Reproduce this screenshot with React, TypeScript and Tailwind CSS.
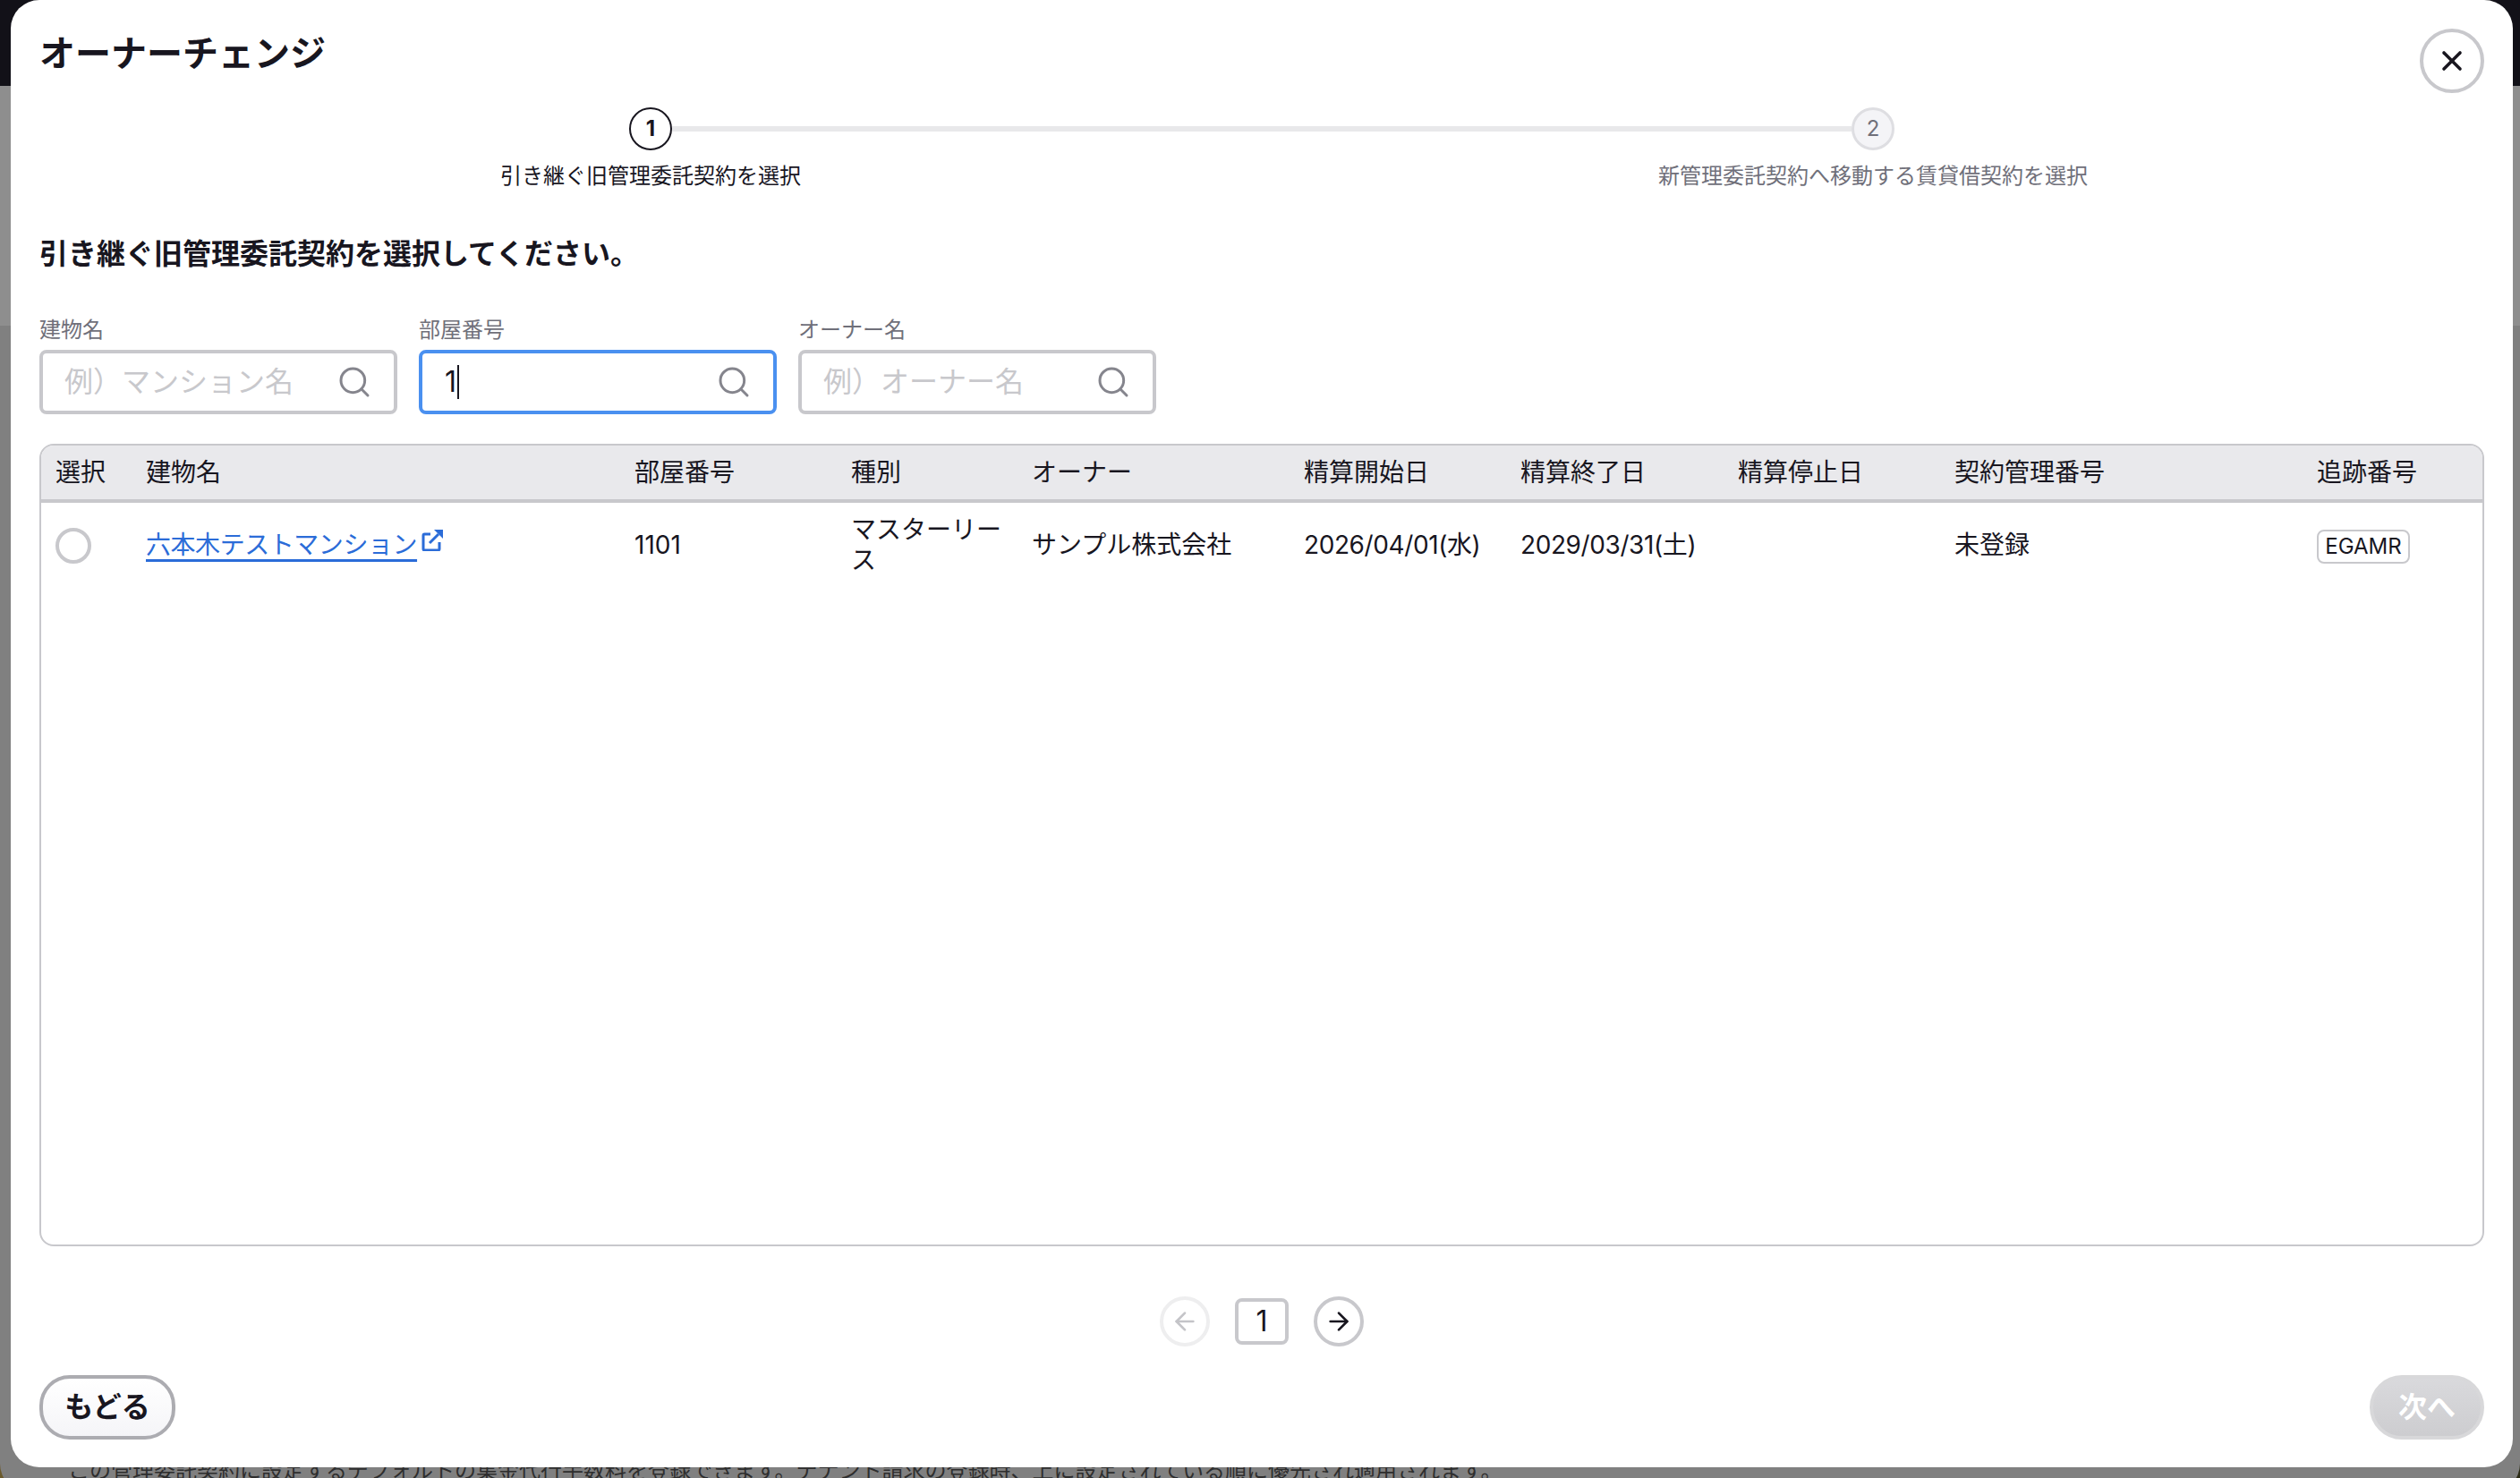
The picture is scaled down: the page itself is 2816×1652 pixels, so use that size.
import React from "react";
import { Search, X, ArrowLeft, ArrowRight } from "lucide-react";

const cols = [
  { label: "選択", w: "w-[101px]" },
  { label: "建物名", w: "w-[546px]" },
  { label: "部屋番号", w: "w-[242px]" },
  { label: "種別", w: "w-[202px]" },
  { label: "オーナー", w: "w-[304px]" },
  { label: "精算開始日", w: "w-[242px]" },
  { label: "精算終了日", w: "w-[243px]" },
  { label: "精算停止日", w: "w-[242px]" },
  { label: "契約管理番号", w: "w-[405px]" },
  { label: "追跡番号", w: "w-auto" },
];

function ExternalIcon() {
  return (
    <svg width="24" height="24" viewBox="0 0 24 24" className="ml-[5px] -mt-[14px] inline-block shrink-0 text-[#2b6cd8]" fill="none">
      <path d="M10 5H3.5A1.5 1.5 0 0 0 2 6.5V21.5A1.5 1.5 0 0 0 3.5 23H18.5A1.5 1.5 0 0 0 20 21.5V14" stroke="currentColor" strokeWidth="3" />
      <path d="M9 15L19 5" stroke="currentColor" strokeWidth="3" />
      <path d="M14 0H24V10Z" fill="currentColor" />
    </svg>
  );
}

function Field({ label, placeholder, value }: { label: string; placeholder: string; value?: string }) {
  const focused = value !== undefined;
  return (
    <div className="w-[400px]">
      <div className="text-[24px] leading-[36px] text-[#70707a]">{label}</div>
      <div
        className={`mt-1 flex h-[72px] items-center rounded-lg border-4 pl-6 pr-6 ${
          focused ? "border-[#4a90f0]" : "border-[#c8c8cc]"
        }`}
      >
        {focused ? (
          <div className="flex min-w-0 flex-1 items-center text-[32px] text-[#18161f]">
            <span className="pl-[1px]">{value}</span>
            <span className="ml-[1px] h-[38px] w-[2px] bg-[#18161f]" />
          </div>
        ) : (
          <input
            readOnly
            placeholder={placeholder}
            className="min-w-0 flex-1 bg-transparent text-[32px] outline-none placeholder:text-[#c8c8cc]"
          />
        )}
        <Search size={40} strokeWidth={1.8} className="shrink-0 text-[#85858d]" />
      </div>
    </div>
  );
}

export default function App() {
  return (
    <div className="relative flex h-[1652px] w-[2816px] flex-col overflow-hidden bg-[linear-gradient(90deg,#6b5a2c_0px,#2a2a14_100%)] font-[Inter,'Noto_Sans_CJK_JP',sans-serif] text-[#18161f]">
      <div className="h-24 shrink-0 bg-[#121118]" />
      <div className="h-[1572px] shrink-0 overflow-hidden rounded-b-[32px] bg-[linear-gradient(#8e8e8e_268px,#808080_268px)] pl-[76px] pt-[1530px] text-[24px] leading-[36px] text-[#2e2e2e]">
        この管理委託契約に設定するデフォルトの集金代行手数料を登録できます。テナント請求の登録時、上に設定されている順に優先され適用されます。
      </div>

      <div className="absolute left-3 top-0 flex h-[1640px] w-[2796px] flex-col rounded-[32px] bg-white px-8">
        <button className="absolute right-8 top-8 flex h-[72px] w-[72px] items-center justify-center rounded-full border-4 border-[#c8c8cc] bg-white">
          <X size={36} strokeWidth={2.4} />
        </button>

        <h1 className="mt-[30px] text-[40px] font-bold leading-[60px]">オーナーチェンジ</h1>

        <div className="mt-[30px] flex items-center">
          <div className="w-[659px]" />
          <div className="flex h-12 w-12 items-center justify-center rounded-full border-2 border-[#18161f] bg-white text-[24px] font-bold">
            1
          </div>
          <div className="h-[6px] flex-1 bg-[#e8e8ea]" />
          <div className="flex h-12 w-12 items-center justify-center rounded-full border-[3px] border-[#dedee2] bg-[#f4f4f7] text-[24px] text-[#70707a]">
            2
          </div>
          <div className="w-[659px]" />
        </div>
        <div className="mt-[11px] grid grid-cols-2 text-center text-[24px] leading-[36px]">
          <div>引き継ぐ旧管理委託契約を選択</div>
          <div className="text-[#70707a]">新管理委託契約へ移動する賃貸借契約を選択</div>
        </div>

        <h2 className="mt-[45px] text-[32px] font-bold leading-[48px]">引き継ぐ旧管理委託契約を選択してください。</h2>

        <div className="mt-[43px] flex gap-6">
          <Field label="建物名" placeholder="例）マンション名" />
          <Field label="部屋番号" placeholder="" value="1" />
          <Field label="オーナー名" placeholder="例）オーナー名" />
        </div>

        <div className="mt-[33px] h-[897px] overflow-hidden rounded-2xl border-2 border-[#c8c8cc]">
          <table className="w-full table-fixed border-collapse text-left text-[28px]">
            <thead>
              <tr className="h-[62px] border-b-4 border-[#c8c8cc] bg-[#e9e9ec]">
                {cols.map((c) => (
                  <th key={c.label} className={`${c.w} px-4 font-normal`}>
                    {c.label}
                  </th>
                ))}
              </tr>
            </thead>
            <tbody>
              <tr className="h-[96px] align-middle">
                <td className="px-4">
                  <div className="mt-[2px] h-10 w-10 rounded-full border-4 border-[#c8c8cc]" />
                </td>
                <td className="px-4">
                  <a className="tracking-[-0.45px] text-[#2b6cd8] underline decoration-[3px] underline-offset-[6px]">六本木テストマンション</a>
                  <ExternalIcon />
                </td>
                <td className="px-4">1101</td>
                <td className="px-4 leading-[34px]">マスターリース</td>
                <td className="px-4">サンプル株式会社</td>
                <td className="whitespace-nowrap px-4 tracking-[-0.4px]">2026/04/01(水)</td>
                <td className="whitespace-nowrap px-4 tracking-[-0.4px]">2029/03/31(土)</td>
                <td className="px-4" />
                <td className="px-4">未登録</td>
                <td className="px-4">
                  <span className="inline-flex h-[38px] w-[104px] items-center justify-center rounded-lg border-2 border-[#c8c8cc] text-[24px]">
                    EGAMR
                  </span>
                </td>
              </tr>
            </tbody>
          </table>
        </div>

        <div className="mt-14 flex items-center justify-center gap-7">
          <div className="flex h-14 w-14 items-center justify-center rounded-full border-4 border-[#eeeeef] text-[#c4c4c8]">
            <ArrowLeft size={32} strokeWidth={2} />
          </div>
          <div className="flex h-[52px] w-[60px] items-center justify-center rounded-lg border-4 border-[#c8c8cc] text-[32px]">
            1
          </div>
          <div className="flex h-14 w-14 items-center justify-center rounded-full border-4 border-[#c8c8cc]">
            <ArrowRight size={32} strokeWidth={2} />
          </div>
        </div>

        <div className="mt-8 flex items-center justify-between">
          <button className="flex h-[72px] w-[152px] items-center justify-center rounded-[34px] border-4 border-[#acacb1] bg-[linear-gradient(#ffffff,#f5f5f8)] text-[32px] font-bold">
            もどる
          </button>
          <button className="flex h-[72px] w-[128px] items-center justify-center rounded-[36px] border-4 border-[#d8d8da] bg-[linear-gradient(#d9d9dc,#cdcdd0)] text-[32px] font-bold text-white">
            次へ
          </button>
        </div>
      </div>
    </div>
  );
}
